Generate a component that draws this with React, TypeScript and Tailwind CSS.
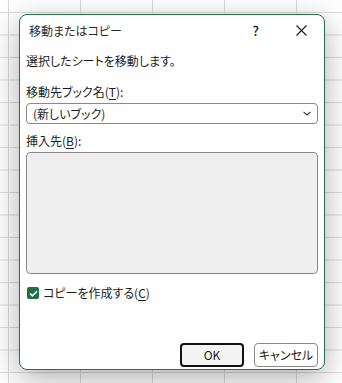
import React from "react";

const font = "[font-family:'Noto_Sans_CJK_JP','Noto_Sans',sans-serif] [font-feature-settings:'palt']";

export default function App() {
  return (
    <div
      className={`relative w-[342px] h-[383px] overflow-hidden bg-white ${font} [background-image:linear-gradient(to_right,#dadada_1px,transparent_1px),linear-gradient(to_bottom,#dadada_1px,transparent_1px)] [background-size:72px_22.5px] [background-position:8px_12px]`}
    >
      <div className="absolute left-[19px] top-[14px] w-[306px] h-[356px] rounded-[8px] border border-[#217346] bg-white shadow-[0_8px_30px_rgba(0,0,0,0.32)] flex flex-col text-[12px] leading-[18px] text-[#1b1b1b]">
        {/* title bar */}
        <div className="h-[31px] flex items-center pl-[9px] pr-[17px]">
          <span className="text-[#2b2b2b]">移動またはコピー</span>
          <span className="ml-auto mr-[37px] text-[13px] font-medium text-[#1b1b1b]">?</span>
          <svg width="11" height="11" viewBox="0 0 11 11" className="text-[#1b1b1b]">
            <path d="M0.5 0.5 L10.5 10.5 M10.5 0.5 L0.5 10.5" stroke="currentColor" strokeWidth="1.1" />
          </svg>
        </div>
        <div className="px-[6px] flex flex-col">
          <div className="mt-[6px] h-[18px] flex items-center">選択したシートを移動します。</div>
          <div className="mt-[13px] h-[18px] flex items-center">
            移動先ブック名(<span className="underline underline-offset-2">T</span>):
          </div>
          <div className="mt-[2px] h-[21px] rounded-[4px] border border-[#8a8a8a] flex items-center pl-[6px] pr-[6px]">
            <span>(新しいブック)</span>
            <svg width="8" height="5" viewBox="0 0 8 5" className="ml-auto">
              <path d="M0.5 0.8 L4 4 L7.5 0.8" fill="none" stroke="#333" strokeWidth="1.1" />
            </svg>
          </div>
          <div className="mt-[8px] h-[18px] flex items-center">
            挿入先(<span className="underline underline-offset-2">B</span>):
          </div>
          <div className="mt-[2px] h-[122px] rounded-[4px] border border-[#8a8a8a] bg-[#efefef]" />
          <div className="mt-[10px] h-[18px] flex items-center pl-[1px]">
            <div className="w-[12px] h-[12px] rounded-[2px] bg-[#1f7145] flex items-center justify-center">
              <svg width="9" height="7" viewBox="0 0 9 7">
                <path d="M1 3.5 L3.4 5.8 L8 1.2" fill="none" stroke="white" strokeWidth="1.6" />
              </svg>
            </div>
            <span className="ml-[4px]">
              コピーを作成する(<span className="underline underline-offset-2">C</span>)
            </span>
          </div>
          <div className="mt-[41px] flex justify-end gap-[10px]">
            <button className="w-[64px] h-[24px] rounded-[4px] border-2 border-[#111] bg-[#f4f4f4] flex items-center justify-center text-[12px] text-[#1b1b1b]">
              OK
            </button>
            <button className="w-[64px] h-[24px] rounded-[4px] border border-[#8a8a8a] bg-white flex items-center justify-center text-[12px] text-[#1b1b1b]">
              キャンセル
            </button>
          </div>
        </div>
      </div>
    </div>
  );
}
